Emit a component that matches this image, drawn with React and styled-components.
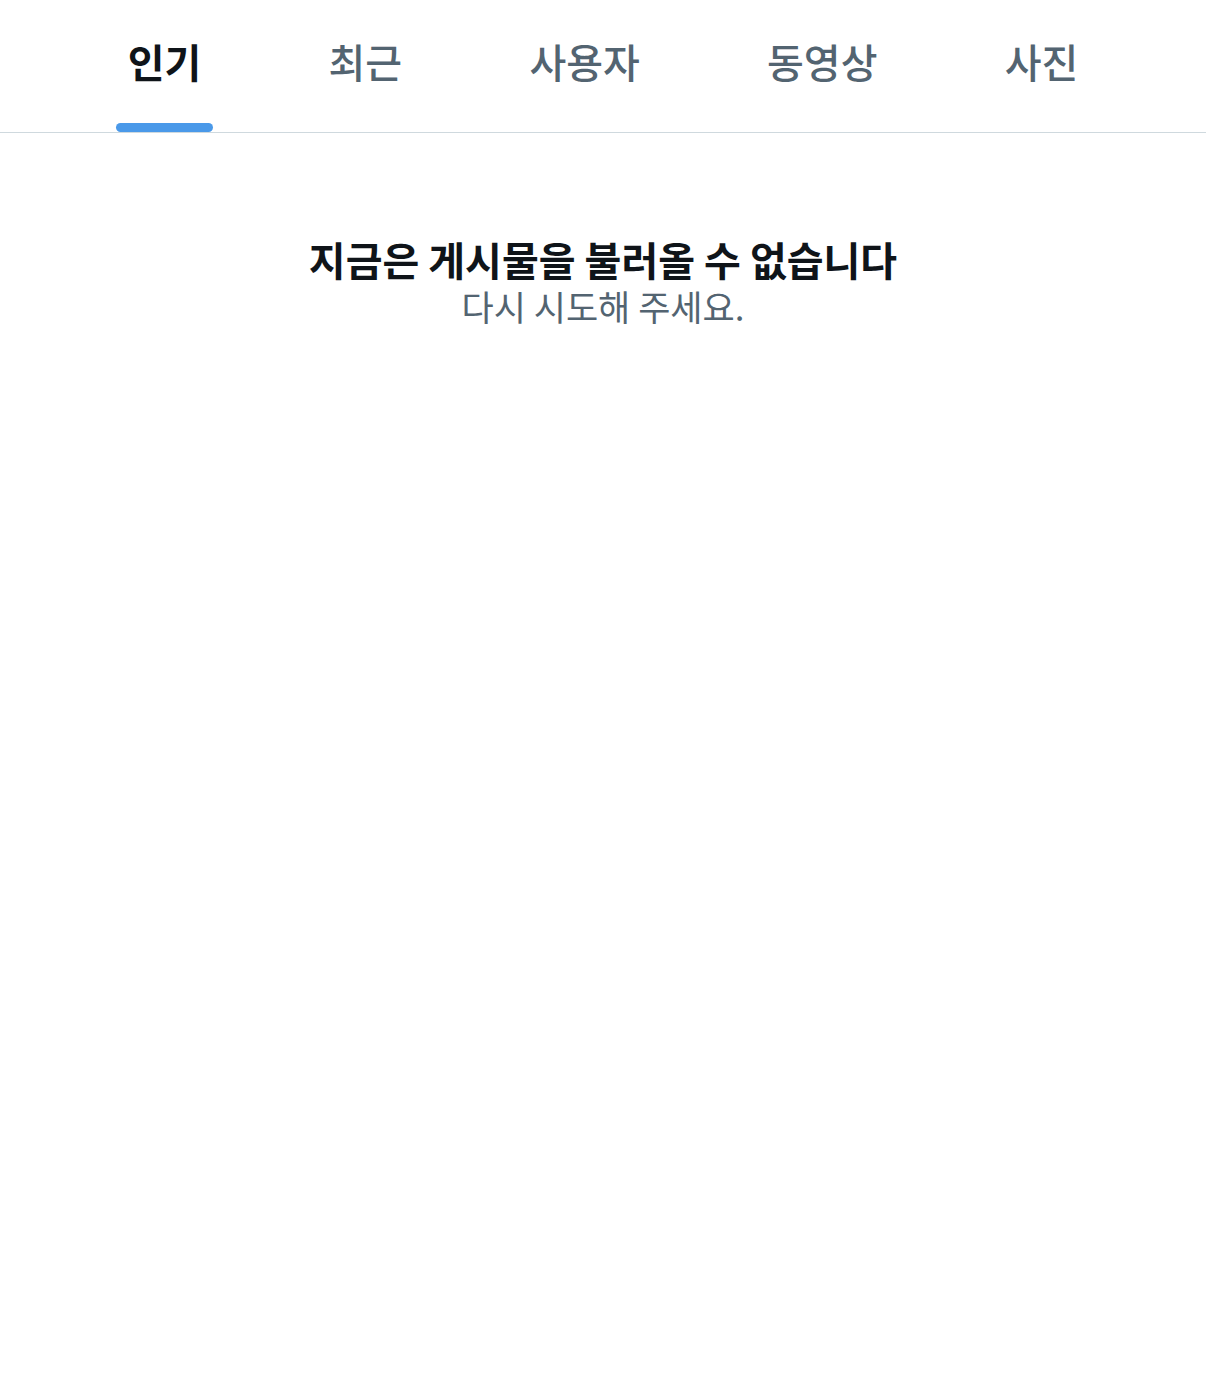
import React, { useState } from 'react';
import styled, { createGlobalStyle } from 'styled-components';

const GlobalStyle = createGlobalStyle`
  html, body {
    margin: 0;
    padding: 0;
    background: #ffffff;
  }
  body {
    font-family: "Noto Sans CJK KR", "Noto Sans", sans-serif;
    -webkit-font-smoothing: antialiased;
  }
`;

const Page = styled.div`
  width: 1206px;
  min-height: 1394px;
  background: #ffffff;
`;

const TabBar = styled.nav`
  display: flex;
  height: 132px;
  padding: 0 64px;
  border-bottom: 1px solid #cfd9de;
`;

const Tab = styled.button`
  position: relative;
  flex: 1 1 auto;
  display: flex;
  align-items: center;
  justify-content: center;
  padding: 0 0 10px;
  border: none;
  background: none;
  cursor: pointer;
  font-family: inherit;
  font-size: 40px;
  font-weight: ${p => (p.$active ? 700 : 500)};
  color: ${p => (p.$active ? '#0f1419' : '#536471')};
`;

const Indicator = styled.span`
  position: absolute;
  bottom: 0;
  left: 50%;
  width: 97px;
  height: 9px;
  margin-left: -48px;
  border-radius: 9px;
  background: #4a99e9;
`;

const Empty = styled.section`
  display: flex;
  flex-direction: column;
  align-items: center;
  padding-top: 102px;
`;

const Title = styled.h2`
  margin: 0;
  font-size: 40px;
  line-height: 48px;
  font-weight: 700;
  color: #0f1419;
`;

const Subtitle = styled.p`
  margin: 0;
  font-size: 35px;
  line-height: 46px;
  font-weight: 400;
  color: #536471;
`;

const tabs = ['인기', '최근', '사용자', '동영상', '사진'];

export default function App() {
  const [active, setActive] = useState(0);

  return (
    <Page>
      <GlobalStyle />
      <TabBar>
        {tabs.map((t, i) => (
          <Tab key={t} $active={i === active} onClick={() => setActive(i)}>
            {t}
            {i === active && <Indicator />}
          </Tab>
        ))}
      </TabBar>
      <Empty>
        <Title>지금은 게시물을 불러올 수 없습니다</Title>
        <Subtitle>다시 시도해 주세요.</Subtitle>
      </Empty>
    </Page>
  );
}
